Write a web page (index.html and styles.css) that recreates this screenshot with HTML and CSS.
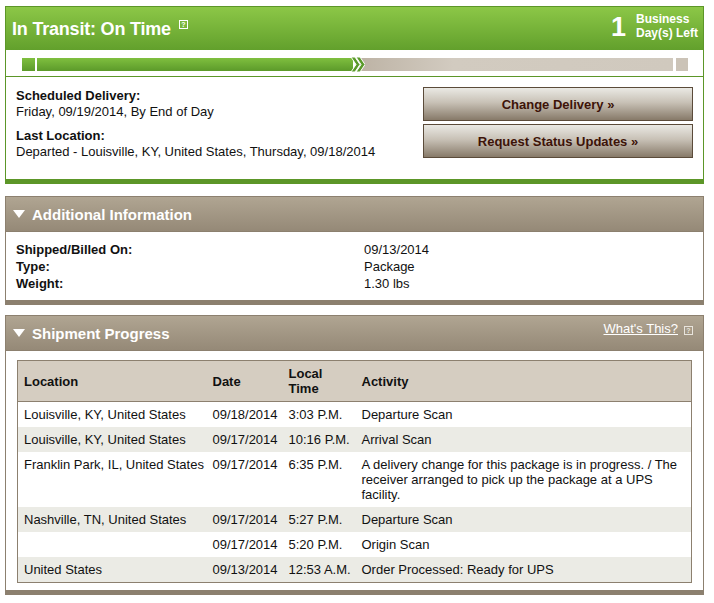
FILE: index.html
```html
<!DOCTYPE html>
<html lang="en">
<head>
    <meta charset="UTF-8">
    <title>Tracking Detail</title>
    <link rel="stylesheet" href="styles.css">
</head>
<body>
    <div class="page">
        <div class="status-box">
            <div class="status-head">
                <h1>In Transit: On Time <span class="help">?</span></h1>
                <div class="days">
                    <span class="days-num">1</span>
                    <span class="days-label">Business<br>Day(s) Left</span>
                </div>
            </div>
            <div class="progress">
                <div class="seg seg-start"></div>
                <div class="seg seg-done">
                    <svg class="chevron" width="14" height="17" viewBox="0 0 14 17">
                        <path d="M0 1 L4 1 L9 8.5 L4 16 L0 16 L5 8.5 Z" fill="#5a9a2a" stroke="#fff" stroke-width="1"/>
                        <path d="M5 1 L9 1 L14 8.5 L9 16 L5 16 L10 8.5 Z" fill="#5a9a2a" stroke="#fff" stroke-width="1"/>
                    </svg>
                </div>
                <div class="seg seg-todo"></div>
                <div class="seg seg-end"></div>
            </div>
            <div class="status-body">
                <div class="details">
                    <dl>
                        <dt>Scheduled Delivery:</dt>
                        <dd>Friday, 09/19/2014, By End of Day</dd>
                        <dt>Last Location:</dt>
                        <dd>Departed - Louisville, KY, United States, Thursday, 09/18/2014</dd>
                    </dl>
                </div>
                <div class="actions">
                    <button class="action-btn">Change Delivery &raquo;</button>
                    <button class="action-btn">Request Status Updates &raquo;</button>
                </div>
            </div>
        </div>

        <div class="panel">
            <div class="panel-head">
                <h2><span class="arrow"></span>Additional Information</h2>
            </div>
            <div class="panel-body info">
                <div class="info-row"><span class="info-key">Shipped/Billed On:</span><span>09/13/2014</span></div>
                <div class="info-row"><span class="info-key">Type:</span><span>Package</span></div>
                <div class="info-row"><span class="info-key">Weight:</span><span>1.30 lbs</span></div>
            </div>
        </div>

        <div class="panel panel-last">
            <div class="panel-head">
                <h2><span class="arrow"></span>Shipment Progress</h2>
                <a class="whats-this" href="#">What's This?</a>
                <span class="help help-dark">?</span>
            </div>
            <div class="panel-body progress-body">
                <table class="progress-table">
                    <thead>
                        <tr>
                            <th class="col-loc">Location</th>
                            <th class="col-date">Date</th>
                            <th class="col-time">Local<br>Time</th>
                            <th>Activity</th>
                        </tr>
                    </thead>
                    <tbody>
                        <tr>
                            <td>Louisville, KY, United States</td>
                            <td>09/18/2014</td>
                            <td>3:03 P.M.</td>
                            <td>Departure Scan</td>
                        </tr>
                        <tr class="alt">
                            <td>Louisville, KY, United States</td>
                            <td>09/17/2014</td>
                            <td>10:16 P.M.</td>
                            <td>Arrival Scan</td>
                        </tr>
                        <tr>
                            <td>Franklin Park, IL, United States</td>
                            <td>09/17/2014</td>
                            <td>6:35 P.M.</td>
                            <td>A delivery change for this package is in progress. / The receiver arranged to pick up the package at a UPS facility.</td>
                        </tr>
                        <tr class="alt">
                            <td>Nashville, TN, United States</td>
                            <td>09/17/2014</td>
                            <td>5:27 P.M.</td>
                            <td>Departure Scan</td>
                        </tr>
                        <tr>
                            <td></td>
                            <td>09/17/2014</td>
                            <td>5:20 P.M.</td>
                            <td>Origin Scan</td>
                        </tr>
                        <tr class="alt">
                            <td>United States</td>
                            <td>09/13/2014</td>
                            <td>12:53 A.M.</td>
                            <td>Order Processed: Ready for UPS</td>
                        </tr>
                    </tbody>
                </table>
            </div>
        </div>
    </div>
</body>
</html>
```

FILE: styles.css
```css
:root {
    --green-top: #8cc747;
    --green-bottom: #62a02c;
    --green-border: #5c9628;
    --tan-top: #b0a592;
    --tan-bottom: #958977;
    --tan-border: #8c806f;
    --text: #111;
}

* {
    margin: 0;
    padding: 0;
    box-sizing: border-box;
}

body {
    font-family: "Liberation Sans", Arial, sans-serif;
    font-size: 13px;
    color: var(--text);
    background: #fff;
    overflow: hidden;
}

.page {
    width: 699px;
    margin: 6px 0 0 5px;
}

/* status box */
.status-box {
    border: 1px solid var(--green-border);
    border-bottom: 5px solid var(--green-border);
    margin-bottom: 12px;
}

.status-head {
    display: flex;
    justify-content: space-between;
    align-items: center;
    height: 43px;
    padding: 0 5px 0 6px;
    background: linear-gradient(var(--green-top), var(--green-bottom));
    color: #fff;
}

.status-head h1 {
    font-size: 18px;
    font-weight: bold;
    letter-spacing: -0.2px;
    display: flex;
    align-items: flex-start;
    padding-top: 2px;
}

.help {
    display: inline-block;
    width: 9px;
    height: 9px;
    border: 1px solid #fff;
    font-size: 7px;
    line-height: 7px;
    text-align: center;
    margin: 1px 0 0 8px;
    font-weight: bold;
}

.days {
    display: flex;
    align-items: center;
    gap: 10px;
    margin-top: -6px;
}

.days-num {
    font-size: 27px;
    font-weight: bold;
    margin-top: 4px;
}

.days-label {
    font-size: 12px;
    font-weight: bold;
    line-height: 14px;
}

.progress {
    display: flex;
    gap: 2px;
    height: 27px;
    padding: 8px 15px 5px 16px;
    border-bottom: 1px solid var(--green-border);
}

.seg {
    height: 13px;
}

.seg-start {
    width: 13px;
    background: linear-gradient(#7fbf3f, #5c9a2a);
}

.seg-done {
    width: 316px;
    position: relative;
    background: linear-gradient(#7fbf3f, #5c9a2a);
}

.chevron {
    position: absolute;
    right: -12px;
    top: -2px;
}

.seg-todo {
    flex: 1;
    background: linear-gradient(90deg, #bdb3a5, #d2cbc0 30%, #d0c9be);
    margin-left: 4px;
    margin-right: 1px;
}

.seg-end {
    width: 12px;
    background: #cbc3b7;
}

.status-body {
    display: flex;
    justify-content: space-between;
    padding: 10px 10px 19px 10px;
}

.details {
    padding-top: 1px;
}

.details dt {
    font-weight: bold;
    line-height: 16px;
}

.details dd {
    line-height: 16px;
    margin-bottom: 8px;
}

.details dd:last-child {
    margin-bottom: 0;
}

.actions {
    display: flex;
    flex-direction: column;
    gap: 3px;
}

.action-btn {
    width: 270px;
    height: 34px;
    border: 1px solid #5b4b3a;
    background: linear-gradient(#eae9e4, #c8c1b6 45%, #877a69);
    color: #3d1308;
    font-family: "Liberation Sans", Arial, sans-serif;
    font-size: 13px;
    font-weight: bold;
    cursor: pointer;
}

/* panels */
.panel {
    border: 1px solid var(--tan-border);
    border-bottom: 5px solid var(--tan-border);
    margin-bottom: 10px;
}

.panel-head {
    display: flex;
    align-items: center;
    height: 35px;
    padding: 0 10px 0 7px;
    background: linear-gradient(var(--tan-top), var(--tan-bottom));
    border-bottom: 1px solid var(--tan-border);
}

.panel-head h2 {
    flex: 1;
    display: flex;
    align-items: center;
    color: #fff;
    font-size: 15px;
    font-weight: bold;
}

.arrow {
    width: 0;
    height: 0;
    border-left: 6px solid transparent;
    border-right: 6px solid transparent;
    border-top: 8px solid #fff;
    margin-right: 7px;
}

.whats-this {
    color: #fff;
    font-size: 13px;
    align-self: flex-start;
    margin-top: 5px;
}

.help-dark {
    border-color: #e8e4dc;
    color: #e8e4dc;
    align-self: flex-start;
    margin: 10px 0 0 6px;
}

.info {
    padding: 9px 10px 8px 10px;
}

.info-row {
    display: grid;
    grid-template-columns: 348px 1fr;
    line-height: 17px;
}

.info-key {
    font-weight: bold;
}

.progress-body {
    padding: 9px 11px 7px 11px;
}

.progress-table {
    width: 100%;
    border-collapse: collapse;
    border: 1px solid var(--tan-border);
    table-layout: fixed;
}

.progress-table th {
    background: #d5cdc1;
    text-align: left;
    font-weight: bold;
    padding: 5px 5px 5px 6px;
    height: 40px;
    line-height: 15px;
    border-bottom: 1px solid var(--tan-border);
}

.progress-table td {
    padding: 5px 5px 5px 6px;
    line-height: 15px;
    vertical-align: top;
}

.progress-table td:nth-child(-n+3) {
    white-space: nowrap;
}

.progress-table tr.alt td {
    background: #ebebe5;
}

.col-loc {
    width: 189px;
}

.col-date {
    width: 76px;
}

.col-time {
    width: 73px;
}
```
